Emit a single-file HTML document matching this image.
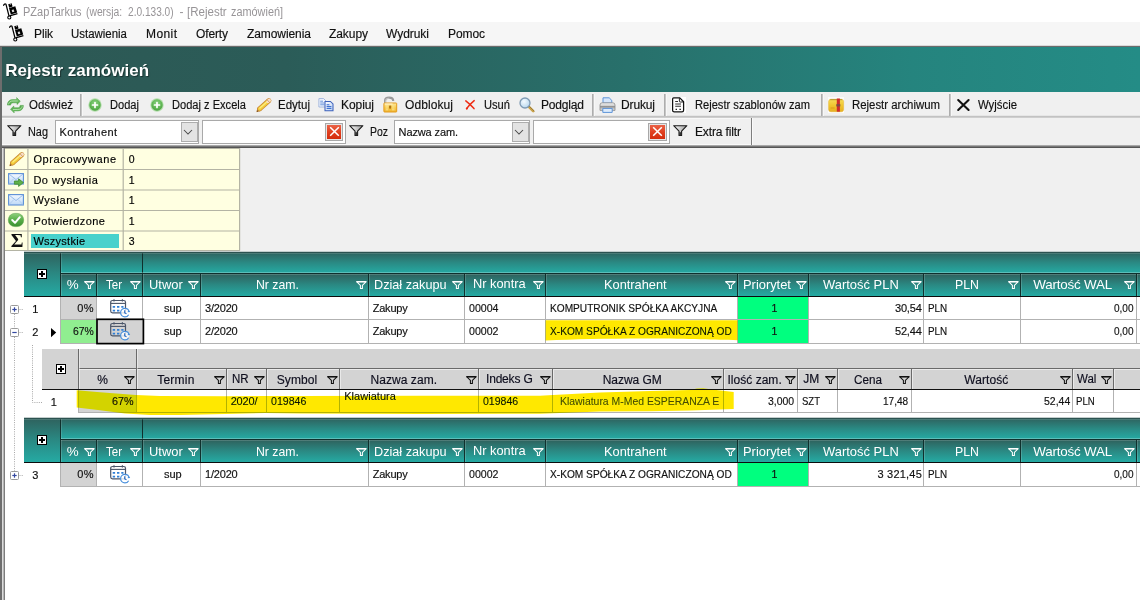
<!DOCTYPE html>
<html><head><meta charset="utf-8"><title>PZapTarkus</title>
<style>
html,body{margin:0;padding:0}
body{width:1140px;height:600px;overflow:hidden;background:#fff;position:relative;font-family:"Liberation Sans",sans-serif;font-size:12px}
body div{position:absolute;box-sizing:border-box}
body svg{position:absolute;overflow:visible}
</style></head><body>
<div style="left:0px;top:0px;width:1140px;height:22px;background:#fff"></div>
<div style="left:22.6px;top:1px;height:22px;line-height:22px;font-size:12px;color:#979497;-webkit-text-stroke:0.16px;transform:scaleX(0.9153);transform-origin:0 50%;white-space:nowrap;-webkit-text-stroke:0;">PZapTarkus</div>
<div style="left:86.3px;top:1px;height:22px;line-height:22px;font-size:12px;color:#979497;-webkit-text-stroke:0.16px;transform:scaleX(0.8595);transform-origin:0 50%;white-space:nowrap;-webkit-text-stroke:0;">(wersja:</div>
<div style="left:128.2px;top:1px;height:22px;line-height:22px;font-size:12px;color:#979497;-webkit-text-stroke:0.16px;transform:scaleX(0.8435);transform-origin:0 50%;white-space:nowrap;-webkit-text-stroke:0;">2.0.133.0)</div>
<div style="left:179.59px;top:1px;height:22px;line-height:22px;font-size:12px;color:#979497;-webkit-text-stroke:0.16px;white-space:nowrap;-webkit-text-stroke:0;">-</div>
<div style="left:186.5px;top:1px;height:22px;line-height:22px;font-size:12px;color:#979497;-webkit-text-stroke:0.16px;transform:scaleX(0.9603);transform-origin:0 50%;white-space:nowrap;-webkit-text-stroke:0;">[Rejestr</div>
<div style="left:230.6px;top:1px;height:22px;line-height:22px;font-size:12px;color:#979497;-webkit-text-stroke:0.16px;transform:scaleX(0.9066);transform-origin:0 50%;white-space:nowrap;-webkit-text-stroke:0;">zamówień]</div>
<div style="left:0px;top:22px;width:1140px;height:24px;background:#f6f6f6"></div>
<div style="left:0px;top:45px;width:1140px;height:1px;background:#dadada"></div>
<div style="left:34.0px;top:23px;height:22px;line-height:22px;font-size:12px;color:#111;-webkit-text-stroke:0.16px;letter-spacing:-0.127px;white-space:nowrap;">Plik</div>
<div style="left:71.0px;top:23px;height:22px;line-height:22px;font-size:12px;color:#111;-webkit-text-stroke:0.16px;transform:scaleX(0.9534);transform-origin:0 50%;white-space:nowrap;">Ustawienia</div>
<div style="left:146.0px;top:23px;height:22px;line-height:22px;font-size:12px;color:#111;-webkit-text-stroke:0.16px;letter-spacing:0.415px;white-space:nowrap;">Monit</div>
<div style="left:196.0px;top:23px;height:22px;line-height:22px;font-size:12px;color:#111;-webkit-text-stroke:0.16px;letter-spacing:-0.140px;white-space:nowrap;">Oferty</div>
<div style="left:247.0px;top:23px;height:22px;line-height:22px;font-size:12px;color:#111;-webkit-text-stroke:0.16px;letter-spacing:-0.082px;white-space:nowrap;">Zamowienia</div>
<div style="left:329.0px;top:23px;height:22px;line-height:22px;font-size:12px;color:#111;-webkit-text-stroke:0.16px;letter-spacing:-0.072px;white-space:nowrap;">Zakupy</div>
<div style="left:386.0px;top:23px;height:22px;line-height:22px;font-size:12px;color:#111;-webkit-text-stroke:0.16px;letter-spacing:-0.043px;white-space:nowrap;">Wydruki</div>
<div style="left:448.0px;top:23px;height:22px;line-height:22px;font-size:12px;color:#111;-webkit-text-stroke:0.16px;letter-spacing:-0.080px;white-space:nowrap;">Pomoc</div>
<div style="left:0px;top:46px;width:1140px;height:1px;background:#6b6b6b"></div>
<div style="left:0px;top:47px;width:1140px;height:45px;background:linear-gradient(90deg,#2d5854 0%,#2b5c58 25%,#28706b 55%,#25847e 80%,#248c86 100%)"></div>
<div style="left:5.3px;top:59.5px;height:22px;line-height:22px;font-size:17px;color:#fff;font-weight:bold;letter-spacing:0.009px;white-space:nowrap;text-shadow:1px 1px 1px rgba(0,0,0,.45);">Rejestr zamówień</div>
<div style="left:0px;top:92px;width:1140px;height:26px;background:#f0f0f0"></div>
<div style="left:0px;top:115px;width:1140px;height:1px;background:#e6e6e6"></div>
<div style="left:0px;top:116px;width:1140px;height:1px;background:#c2c2c2"></div>
<div style="left:0px;top:117px;width:1140px;height:1px;background:#cecece"></div>
<div style="left:29.0px;top:95px;height:21px;line-height:21px;font-size:12px;color:#111;-webkit-text-stroke:0.16px;transform:scaleX(0.9561);transform-origin:0 50%;white-space:nowrap;">Odśwież</div>
<div style="left:110.0px;top:95px;height:21px;line-height:21px;font-size:12px;color:#111;-webkit-text-stroke:0.16px;transform:scaleX(0.9242);transform-origin:0 50%;white-space:nowrap;">Dodaj</div>
<div style="left:172.0px;top:95px;height:21px;line-height:21px;font-size:12px;color:#111;-webkit-text-stroke:0.16px;transform:scaleX(0.9238);transform-origin:0 50%;white-space:nowrap;">Dodaj z Excela</div>
<div style="left:278.0px;top:95px;height:21px;line-height:21px;font-size:12px;color:#111;-webkit-text-stroke:0.16px;transform:scaleX(0.9592);transform-origin:0 50%;white-space:nowrap;">Edytuj</div>
<div style="left:341.0px;top:95px;height:21px;line-height:21px;font-size:12px;color:#111;-webkit-text-stroke:0.16px;letter-spacing:-0.072px;white-space:nowrap;">Kopiuj</div>
<div style="left:405.0px;top:95px;height:21px;line-height:21px;font-size:12px;color:#111;-webkit-text-stroke:0.16px;letter-spacing:0.094px;white-space:nowrap;">Odblokuj</div>
<div style="left:484.0px;top:95px;height:21px;line-height:21px;font-size:12px;color:#111;-webkit-text-stroke:0.16px;transform:scaleX(0.9279);transform-origin:0 50%;white-space:nowrap;">Usuń</div>
<div style="left:541.0px;top:95px;height:21px;line-height:21px;font-size:12px;color:#111;-webkit-text-stroke:0.16px;letter-spacing:-0.173px;white-space:nowrap;">Podgląd</div>
<div style="left:621.0px;top:95px;height:21px;line-height:21px;font-size:12px;color:#111;-webkit-text-stroke:0.16px;letter-spacing:-0.136px;white-space:nowrap;">Drukuj</div>
<div style="left:695.0px;top:95px;height:21px;line-height:21px;font-size:12px;color:#111;-webkit-text-stroke:0.16px;transform:scaleX(0.9268);transform-origin:0 50%;white-space:nowrap;">Rejestr szablonów zam</div>
<div style="left:852.0px;top:95px;height:21px;line-height:21px;font-size:12px;color:#111;-webkit-text-stroke:0.16px;transform:scaleX(0.9493);transform-origin:0 50%;white-space:nowrap;">Rejestr archiwum</div>
<div style="left:978.0px;top:95px;height:21px;line-height:21px;font-size:12px;color:#111;-webkit-text-stroke:0.16px;transform:scaleX(0.9461);transform-origin:0 50%;white-space:nowrap;">Wyjście</div>
<div style="left:80px;top:94px;width:1px;height:22px;background:#adadad"></div>
<div style="left:81px;top:94px;width:1px;height:22px;background:#c6c6c6"></div>
<div style="left:82px;top:94px;width:1px;height:22px;background:#f7f7f7"></div>
<div style="left:592px;top:94px;width:1px;height:22px;background:#adadad"></div>
<div style="left:593px;top:94px;width:1px;height:22px;background:#c6c6c6"></div>
<div style="left:594px;top:94px;width:1px;height:22px;background:#f7f7f7"></div>
<div style="left:664px;top:94px;width:1px;height:22px;background:#adadad"></div>
<div style="left:665px;top:94px;width:1px;height:22px;background:#c6c6c6"></div>
<div style="left:666px;top:94px;width:1px;height:22px;background:#f7f7f7"></div>
<div style="left:821px;top:94px;width:1px;height:22px;background:#adadad"></div>
<div style="left:822px;top:94px;width:1px;height:22px;background:#c6c6c6"></div>
<div style="left:823px;top:94px;width:1px;height:22px;background:#f7f7f7"></div>
<div style="left:949px;top:94px;width:1px;height:22px;background:#adadad"></div>
<div style="left:950px;top:94px;width:1px;height:22px;background:#c6c6c6"></div>
<div style="left:951px;top:94px;width:1px;height:22px;background:#f7f7f7"></div>
<div style="left:0px;top:118px;width:1140px;height:28px;background:#f0f0f0"></div>
<div style="left:0px;top:118px;width:751px;height:27px;background:#f0f0f0"></div>
<div style="left:751px;top:118px;width:1px;height:27px;background:#7e7e7e"></div>
<div style="left:752px;top:118px;width:1px;height:27px;background:#fafafa"></div>
<div style="left:0px;top:118px;width:750px;height:1px;background:#f8f8f8"></div>
<div style="left:28.0px;top:122px;height:21px;line-height:21px;font-size:12px;color:#111;-webkit-text-stroke:0.16px;transform:scaleX(0.9083);transform-origin:0 50%;white-space:nowrap;">Nag</div>
<div style="left:370.0px;top:122px;height:21px;line-height:21px;font-size:12px;color:#111;-webkit-text-stroke:0.16px;transform:scaleX(0.8696);transform-origin:0 50%;white-space:nowrap;">Poz</div>
<div style="left:695.0px;top:121.5px;height:21px;line-height:21px;font-size:12px;color:#111;-webkit-text-stroke:0.16px;letter-spacing:-0.134px;white-space:nowrap;">Extra filtr</div>
<div style="left:55px;top:120px;width:144px;height:24px;background:#fff;border:1px solid #a9a9a9"></div>
<div style="left:181px;top:122px;width:16.5px;height:19.5px;background:#e3e3e3;border:1px solid #adadad"></div>
<svg style="left:183px;top:129px" width="10" height="7" viewBox="0 0 10 7"><path d="M1 1 L5 5 L9 1" fill="none" stroke="#484848" stroke-width="1.05"/></svg>
<div style="left:59.6px;top:120.3px;height:24px;line-height:24px;font-size:11px;color:#111;-webkit-text-stroke:0.16px;letter-spacing:0.395px;white-space:nowrap;">Kontrahent</div>
<div style="left:202px;top:120px;width:144px;height:24px;background:#fff;border:1px solid #a9a9a9"></div>
<div style="left:324.5px;top:122.5px;width:18.5px;height:18px;background:#e6e6e6;border:1px solid #a8a8a8"></div>
<div style="left:326.5px;top:124.5px;width:14.5px;height:14px;background:linear-gradient(180deg,#ea6247 0%,#e0401f 50%,#d42c0c 100%)"></div>
<svg style="left:328.5px;top:126px" width="11" height="11" viewBox="0 0 11 11"><path d="M1.2 1.2 L9.8 9.8 M9.8 1.2 L1.2 9.8" fill="none" stroke="#fff" stroke-width="1.5"/></svg>
<div style="left:394px;top:120px;width:136px;height:24px;background:#fff;border:1px solid #a9a9a9"></div>
<div style="left:512px;top:122px;width:16.5px;height:19.5px;background:#e3e3e3;border:1px solid #adadad"></div>
<svg style="left:514px;top:129px" width="10" height="7" viewBox="0 0 10 7"><path d="M1 1 L5 5 L9 1" fill="none" stroke="#484848" stroke-width="1.05"/></svg>
<div style="left:398.6px;top:120.3px;height:24px;line-height:24px;font-size:11px;color:#111;-webkit-text-stroke:0.16px;letter-spacing:-0.122px;white-space:nowrap;">Nazwa zam.</div>
<div style="left:533px;top:120px;width:136.5px;height:24px;background:#fff;border:1px solid #a9a9a9"></div>
<div style="left:648.0px;top:122.5px;width:18.5px;height:18px;background:#e6e6e6;border:1px solid #a8a8a8"></div>
<div style="left:650.0px;top:124.5px;width:14.5px;height:14px;background:linear-gradient(180deg,#ea6247 0%,#e0401f 50%,#d42c0c 100%)"></div>
<svg style="left:652.0px;top:126px" width="11" height="11" viewBox="0 0 11 11"><path d="M1.2 1.2 L9.8 9.8 M9.8 1.2 L1.2 9.8" fill="none" stroke="#fff" stroke-width="1.5"/></svg>
<svg style="left:3px;top:3px" width="16" height="18" viewBox="0 0 16 18"><path d="M0.6 2.3 Q1.6 0.3 3 1.3 L6.1 13.4" fill="none" stroke="#000" stroke-width="1.25" stroke-linecap="round"/><path d="M5.2 1.3 L8.6 0.3 L9.6 3.6 L6.2 4.7 Z" fill="#000"/><path d="M6.7 0.7 L7.5 0.45 L7.8 1.5 L7.0 1.75 Z" fill="#fff"/><path d="M6.0 5.0 L12.3 3.2 L14.2 9.6 L7.8 11.5 Z" fill="#000"/><path d="M8.7 7.0 L10.7 6.4 L11.4 8.6 L9.4 9.2 Z" fill="#fff"/><path d="M9.7 7.6 L10.3 7.4 L10.5 8.1 L9.9 8.3 Z" fill="#000"/><path d="M6.6 12.9 L14.4 10.7" fill="none" stroke="#000" stroke-width="1.3"/><circle cx="6.3" cy="14.5" r="1.55" fill="#fff" stroke="#000" stroke-width="1.1"/></svg>
<svg style="left:9px;top:25px" width="16" height="18" viewBox="0 0 16 18"><path d="M0.6 2.3 Q1.6 0.3 3 1.3 L6.1 13.4" fill="none" stroke="#000" stroke-width="1.25" stroke-linecap="round"/><path d="M5.2 1.3 L8.6 0.3 L9.6 3.6 L6.2 4.7 Z" fill="#000"/><path d="M6.7 0.7 L7.5 0.45 L7.8 1.5 L7.0 1.75 Z" fill="#fff"/><path d="M6.0 5.0 L12.3 3.2 L14.2 9.6 L7.8 11.5 Z" fill="#000"/><path d="M8.7 7.0 L10.7 6.4 L11.4 8.6 L9.4 9.2 Z" fill="#fff"/><path d="M9.7 7.6 L10.3 7.4 L10.5 8.1 L9.9 8.3 Z" fill="#000"/><path d="M6.6 12.9 L14.4 10.7" fill="none" stroke="#000" stroke-width="1.3"/><circle cx="6.3" cy="14.5" r="1.55" fill="#fff" stroke="#000" stroke-width="1.1"/></svg>
<svg style="left:6.5px;top:96.5px" width="17" height="17" viewBox="0 0 17 17"><defs><linearGradient id="gr1" x1="0" y1="0" x2="0" y2="1"><stop offset="0" stop-color="#7cc873"/><stop offset="1" stop-color="#4fa547"/></linearGradient></defs><path d="M0.4 8.1 C0.4 4.6 2.6 2.6 6 2.6 L9.8 2.6 L9.6 0.6 L13.3 4.3 L10 7.5 L10 5.8 L6.5 5.8 C4.8 5.8 3.8 6.6 3.6 8.1 Z" fill="url(#gr1)" stroke="#4a9f44" stroke-width="0.5" stroke-linejoin="round"/><path d="M1.6 7 C2 5 3.6 4 6 4 L10.4 4" fill="none" stroke="#b4e2ae" stroke-width="0.9" stroke-linecap="round"/><g transform="rotate(180 8.4 8.25)"><path d="M0.4 8.1 C0.4 4.6 2.6 2.6 6 2.6 L9.8 2.6 L9.6 0.6 L13.3 4.3 L10 7.5 L10 5.8 L6.5 5.8 C4.8 5.8 3.8 6.6 3.6 8.1 Z" fill="url(#gr1)" stroke="#4a9f44" stroke-width="0.5" stroke-linejoin="round"/><path d="M1.6 7 C2 5 3.6 4 6 4 L10.4 4" fill="none" stroke="#b4e2ae" stroke-width="0.9" stroke-linecap="round"/></g></svg>
<svg style="left:88px;top:98px" width="14" height="14" viewBox="0 0 14 14"><defs><radialGradient id="ga" cx="0.5" cy="0.35" r="0.75"><stop offset="0" stop-color="#8fd486"/><stop offset="0.6" stop-color="#5cb350"/><stop offset="1" stop-color="#46993c"/></radialGradient></defs><circle cx="7" cy="7" r="6.7" fill="#b4deac"/><circle cx="7" cy="7" r="5.7" fill="url(#ga)"/><path d="M7 4.5 V9.5 M4.5 7 H9.5" stroke="#fff" stroke-width="1.7" stroke-linecap="round"/></svg>
<svg style="left:150px;top:98px" width="14" height="14" viewBox="0 0 14 14"><defs><radialGradient id="ga" cx="0.5" cy="0.35" r="0.75"><stop offset="0" stop-color="#8fd486"/><stop offset="0.6" stop-color="#5cb350"/><stop offset="1" stop-color="#46993c"/></radialGradient></defs><circle cx="7" cy="7" r="6.7" fill="#b4deac"/><circle cx="7" cy="7" r="5.7" fill="url(#ga)"/><path d="M7 4.5 V9.5 M4.5 7 H9.5" stroke="#fff" stroke-width="1.7" stroke-linecap="round"/></svg>
<svg style="left:256px;top:97.5px" width="16" height="15" viewBox="0 0 16 15"><path d="M0.8 13.7 L2.2 9.3 L5 12.4 Z" fill="#eccaa0" stroke="#b9772c" stroke-width="0.8" stroke-linejoin="round"/><path d="M0.8 13.7 L1.3 12.1 L2.3 13.2 Z" fill="#5a3a14"/><path d="M3.6 10.9 L12.9 2.7" stroke="#c78734" stroke-width="5" stroke-linecap="round"/><path d="M3.6 10.9 L12.9 2.7" stroke="#f3cb3c" stroke-width="3.5" stroke-linecap="round"/><path d="M3.9 10.1 L12.2 2.8" stroke="#fbec7e" stroke-width="1.3" stroke-linecap="round"/><path d="M12.2 3.3 L13.2 2.4" stroke="#f6dccb" stroke-width="3.4" stroke-linecap="round"/><path d="M10.9 1.6 L14.1 5" stroke="#c78734" stroke-width="0.7"/></svg>
<svg style="left:318px;top:98px" width="16" height="14" viewBox="0 0 16 14"><defs><linearGradient id="gcp" x1="0" y1="0" x2="1" y2="1"><stop offset="0" stop-color="#ffffff"/><stop offset="1" stop-color="#b9d0f4"/></linearGradient></defs><path d="M0.9 0.6 H5.6 L8 3 V9 H0.9 Z" fill="#f2f6fd" stroke="#9ab0da" stroke-width="0.9"/><path d="M2.2 3.2 H5 M2.2 5 H6.6 M2.2 6.8 H6.6" stroke="#5b8ad8" stroke-width="0.9"/><path d="M7 3.4 H12.4 L15 6 V12.8 H7 Z" fill="url(#gcp)" stroke="#3d62bc" stroke-width="1.05"/><path d="M8.6 6.8 H11.4 M8.6 8.6 H13.4 M8.6 10.4 H13.4" stroke="#2f66cc" stroke-width="1"/></svg>
<svg style="left:383px;top:96px" width="15" height="17" viewBox="0 0 15 17"><defs><linearGradient id="gl" x1="0" y1="0" x2="0" y2="1"><stop offset="0" stop-color="#fde9a0"/><stop offset="0.5" stop-color="#f8cd50"/><stop offset="1" stop-color="#f0b430"/></linearGradient></defs><path d="M2.1 7.4 V4.6 Q2.1 1.6 6.1 1.6 Q10.2 1.6 10.2 4.9" fill="none" stroke="#9a9a9a" stroke-width="2.2"/><path d="M2.4 7 V4.6 Q2.4 2.2 6.1 2.2" fill="none" stroke="#d8d8d8" stroke-width="0.7"/><rect x="0.9" y="7" width="12.8" height="9" rx="0.6" fill="url(#gl)" stroke="#e39a1c" stroke-width="1"/><path d="M1.9 8 H9.6" stroke="#fff8dc" stroke-width="0.9"/><path d="M2.8 10 H5.2 M2.8 12 H5.2 M2.8 13.8 H5.2 M9 10 H11.6 M9 12 H11.6 M9 13.8 H11.6" stroke="#fbe9a4" stroke-width="0.8"/><rect x="6.1" y="9.5" width="2" height="3.3" rx="0.8" fill="#b07414"/></svg>
<svg style="left:464.5px;top:100px" width="10" height="10" viewBox="0 0 10 10"><path d="M0.8 0.9 Q4.6 3.8 9 8.6" fill="none" stroke="#ee2c14" stroke-width="1.5" stroke-linecap="round"/><path d="M9.2 0.6 Q5 4 1.6 8.6" fill="none" stroke="#ee2c14" stroke-width="1.5" stroke-linecap="round"/><circle cx="1.9" cy="8.5" r="1.1" fill="#ee2c14"/></svg>
<svg style="left:519px;top:96.5px" width="16" height="16" viewBox="0 0 16 16"><defs><radialGradient id="gm" cx="0.4" cy="0.35" r="0.7"><stop offset="0" stop-color="#f4fbff"/><stop offset="1" stop-color="#b5d6ee"/></radialGradient></defs><path d="M9.4 9.4 L14.2 14.2" stroke="#c9a24a" stroke-width="2.6" stroke-linecap="round"/><path d="M9.4 9.4 L14.2 14.2" stroke="#8a6a2a" stroke-width="0.7" stroke-linecap="round" transform="translate(0.9,-0.2)"/><circle cx="6" cy="6" r="5" fill="url(#gm)" stroke="#7f9bb4" stroke-width="1.3"/></svg>
<svg style="left:598.5px;top:96.8px" width="17" height="16" viewBox="0 0 17 16"><defs><linearGradient id="gp" x1="0" y1="0" x2="0" y2="1"><stop offset="0" stop-color="#f2f2f2"/><stop offset="0.38" stop-color="#cfcfcf"/><stop offset="0.5" stop-color="#8c8c8c"/><stop offset="0.68" stop-color="#b8b8b8"/><stop offset="1" stop-color="#e2e2e2"/></linearGradient></defs><path d="M4 6 V0.8 H10.2 L12.8 3.4 V6 Z" fill="#d6e6fb" stroke="#5c93d8" stroke-width="1"/><path d="M1 13.4 V8 Q1 5.8 3.2 5.8 H13.8 Q16 5.8 16 8 V13.4 Z" fill="url(#gp)" stroke="#8a8a8a" stroke-width="0.8"/><path d="M3.8 11.4 H13.2 V15.4 H3.8 Z" fill="#dcebfc" stroke="#5c93d8" stroke-width="1"/></svg>
<div style="left:671.4px;top:96.7px;width:14.5px;height:16.3px;background:#fff"></div>
<svg style="left:672px;top:96.9px" width="13" height="16" viewBox="0 0 13 16"><path d="M1.6 0.9 H7.8 L11.6 4.7 V13.2 Q11.6 14.8 10 14.8 H2.2 Q0.6 14.8 0.6 13.2 V1.9 Q0.6 0.9 1.6 0.9 Z" fill="#fff" stroke="#111" stroke-width="1.25" stroke-linejoin="round"/><path d="M7.4 1.2 V4.2 Q7.4 5 8.2 5 H11.2" fill="none" stroke="#111" stroke-width="0.9"/><path d="M3.2 4.4 H6 M3.2 7 H9 M3.2 9.3 H9" stroke="#333" stroke-width="1.05"/><path d="M3.6 12.3 H5 M7.4 12.3 H8.9" stroke="#222" stroke-width="1.2"/></svg>
<div style="left:827.7px;top:96.8px;width:16.3px;height:16px;background:#fbfbfb"></div>
<svg style="left:828.2px;top:97.5px" width="16" height="15" viewBox="0 0 16 15"><defs><linearGradient id="gz" x1="0" y1="0" x2="0" y2="1"><stop offset="0" stop-color="#f6dc58"/><stop offset="0.5" stop-color="#f0c630"/><stop offset="1" stop-color="#e6ae22"/></linearGradient></defs><rect x="0.6" y="1.3" width="15" height="12.4" rx="2.2" fill="url(#gz)" stroke="#e3b02c" stroke-width="0.5"/><path d="M2.2 1.7 H14" stroke="#a5861c" stroke-width="0.8"/><rect x="8.8" y="0.5" width="3.1" height="13.2" fill="#cf2b2b"/><rect x="8.3" y="6.2" width="4" height="2.2" fill="#7b4a48"/><path d="M2.6 10 H6.6" stroke="#dc9c1c" stroke-width="1.1"/></svg>
<svg style="left:957.3px;top:99px" width="13" height="12" viewBox="0 0 13 12"><path d="M1.2 1 L11.6 11 M11.6 1 L1.2 11" stroke="#111" stroke-width="2.1" stroke-linecap="round"/></svg>
<svg style="left:7px;top:125px" width="15" height="11" viewBox="0 0 15 11"><defs><linearGradient id="gf" x1="0" y1="0" x2="1" y2="0"><stop offset="0" stop-color="#fff"/><stop offset="1" stop-color="#9a9a9a"/></linearGradient></defs><path d="M0.7 0.7 H13.9 L8.6 6.2 V10.4 H6 V6.2 Z" fill="url(#gf)" stroke="#1a1a1a" stroke-width="1.1" stroke-linejoin="round"/><path d="M6.2 7.2 H8.4 V10.2 H6.2 Z" fill="#333"/></svg>
<svg style="left:349px;top:125px" width="15" height="11" viewBox="0 0 15 11"><defs><linearGradient id="gf" x1="0" y1="0" x2="1" y2="0"><stop offset="0" stop-color="#fff"/><stop offset="1" stop-color="#9a9a9a"/></linearGradient></defs><path d="M0.7 0.7 H13.9 L8.6 6.2 V10.4 H6 V6.2 Z" fill="url(#gf)" stroke="#1a1a1a" stroke-width="1.1" stroke-linejoin="round"/><path d="M6.2 7.2 H8.4 V10.2 H6.2 Z" fill="#333"/></svg>
<svg style="left:673px;top:125px" width="15" height="11" viewBox="0 0 15 11"><defs><linearGradient id="gf" x1="0" y1="0" x2="1" y2="0"><stop offset="0" stop-color="#fff"/><stop offset="1" stop-color="#9a9a9a"/></linearGradient></defs><path d="M0.7 0.7 H13.9 L8.6 6.2 V10.4 H6 V6.2 Z" fill="url(#gf)" stroke="#1a1a1a" stroke-width="1.1" stroke-linejoin="round"/><path d="M6.2 7.2 H8.4 V10.2 H6.2 Z" fill="#333"/></svg>
<div style="left:2px;top:144px;width:749px;height:1px;background:#fafafa"></div>
<div style="left:0px;top:145px;width:1140px;height:1px;background:#a8a8a8"></div>
<div style="left:0px;top:146px;width:1140px;height:1px;background:#777"></div>
<div style="left:0px;top:147px;width:1140px;height:1px;background:#555"></div>
<div style="left:0px;top:148px;width:1140px;height:103px;background:#f0f0f0"></div>
<div style="left:0px;top:47px;width:2px;height:553px;background:#6d6d6d"></div>
<div style="left:2px;top:148px;width:1px;height:452px;background:#dcdcdc"></div>
<div style="left:3px;top:148px;width:1px;height:452px;background:#b4b4b4"></div>
<div style="left:4px;top:148px;width:1px;height:452px;background:#7c7c7c"></div>
<div style="left:5px;top:148px;width:235px;height:102.5px;background:#ffffe1"></div>
<div style="left:31.4px;top:234.2px;width:88px;height:13.5px;background:#48d1cc"></div>
<div style="left:33.4px;top:149.0px;height:20.5px;line-height:20.5px;font-size:11px;color:#000;-webkit-text-stroke:0.16px;letter-spacing:0.619px;white-space:nowrap;">Opracowywane</div>
<div style="left:128.7px;top:149.0px;height:20.5px;line-height:20.5px;font-size:10.5px;color:#000;-webkit-text-stroke:0.16px;white-space:nowrap;">0</div>
<div style="left:33.4px;top:169.5px;height:20.5px;line-height:20.5px;font-size:11px;color:#000;-webkit-text-stroke:0.16px;letter-spacing:0.525px;white-space:nowrap;">Do wysłania</div>
<div style="left:128.7px;top:169.5px;height:20.5px;line-height:20.5px;font-size:10.5px;color:#000;-webkit-text-stroke:0.16px;white-space:nowrap;">1</div>
<div style="left:33.4px;top:190.0px;height:20.5px;line-height:20.5px;font-size:11px;color:#000;-webkit-text-stroke:0.16px;letter-spacing:0.587px;white-space:nowrap;">Wysłane</div>
<div style="left:128.7px;top:190.0px;height:20.5px;line-height:20.5px;font-size:10.5px;color:#000;-webkit-text-stroke:0.16px;white-space:nowrap;">1</div>
<div style="left:33.4px;top:210.5px;height:20.5px;line-height:20.5px;font-size:11px;color:#000;-webkit-text-stroke:0.16px;letter-spacing:0.449px;white-space:nowrap;">Potwierdzone</div>
<div style="left:128.7px;top:210.5px;height:20.5px;line-height:20.5px;font-size:10.5px;color:#000;-webkit-text-stroke:0.16px;white-space:nowrap;">1</div>
<div style="left:33.4px;top:231.0px;height:20.5px;line-height:20.5px;font-size:11px;color:#000;-webkit-text-stroke:0.16px;letter-spacing:0.263px;white-space:nowrap;">Wszystkie</div>
<div style="left:128.7px;top:231.0px;height:20.5px;line-height:20.5px;font-size:10.5px;color:#000;-webkit-text-stroke:0.16px;white-space:nowrap;">3</div>
<svg style="left:0;top:0" width="260" height="260" viewBox="0 0 260 260"><rect x="5" y="148" width="235" height="1" fill="#b4b4a4"/><rect x="5" y="169" width="235" height="1" fill="#b4b4a4"/><rect x="5" y="189.5" width="235" height="1" fill="#b4b4a4"/><rect x="5" y="210" width="235" height="1" fill="#b4b4a4"/><rect x="5" y="230.5" width="235" height="1" fill="#b4b4a4"/><rect x="5" y="250" width="235" height="1" fill="#b4b4a4"/><rect x="27.3" y="148" width="1.2" height="102.5" fill="#b4b4a4"/><rect x="122.6" y="148" width="1.2" height="102.5" fill="#b4b4a4"/><rect x="239" y="148" width="1.2" height="102.5" fill="#b4b4a4"/></svg>
<svg style="left:8.5px;top:151.5px" width="16" height="15" viewBox="0 0 16 15"><path d="M0.8 13.7 L2.2 9.3 L5 12.4 Z" fill="#eccaa0" stroke="#b9772c" stroke-width="0.8" stroke-linejoin="round"/><path d="M0.8 13.7 L1.3 12.1 L2.3 13.2 Z" fill="#5a3a14"/><path d="M3.6 10.9 L12.9 2.7" stroke="#c78734" stroke-width="5" stroke-linecap="round"/><path d="M3.6 10.9 L12.9 2.7" stroke="#f3cb3c" stroke-width="3.5" stroke-linecap="round"/><path d="M3.9 10.1 L12.2 2.8" stroke="#fbec7e" stroke-width="1.3" stroke-linecap="round"/><path d="M12.2 3.3 L13.2 2.4" stroke="#f6dccb" stroke-width="3.4" stroke-linecap="round"/><path d="M10.9 1.6 L14.1 5" stroke="#c78734" stroke-width="0.7"/></svg>
<svg style="left:7.8px;top:173px" width="16" height="14" viewBox="0 0 16 14"><defs><linearGradient id="ge" x1="0" y1="0" x2="0" y2="1"><stop offset="0" stop-color="#f4f9ff"/><stop offset="1" stop-color="#bcd8f6"/></linearGradient></defs><rect x="0.6" y="0.6" width="14.8" height="10.4" fill="url(#ge)" stroke="#5b8fd6" stroke-width="1.1"/><path d="M1 1 L8 6.6 L15 1" fill="none" stroke="#8fb6e8" stroke-width="0.9"/><path d="M1 10.6 L5.8 5.6 M15 10.6 L10.2 5.6" fill="none" stroke="#a9c8ee" stroke-width="0.8"/><path d="M6.4 8 H10.6 V5.8 L15.4 9.6 L10.6 13.4 V11.2 H6.4 Z" fill="#5fb04a" stroke="#3d8a30" stroke-width="0.8" stroke-linejoin="round"/></svg>
<svg style="left:7.8px;top:193.6px" width="16" height="14" viewBox="0 0 16 14"><defs><linearGradient id="ge" x1="0" y1="0" x2="0" y2="1"><stop offset="0" stop-color="#f4f9ff"/><stop offset="1" stop-color="#bcd8f6"/></linearGradient></defs><rect x="0.6" y="0.6" width="14.8" height="10.4" fill="url(#ge)" stroke="#5b8fd6" stroke-width="1.1"/><path d="M1 1 L8 6.6 L15 1" fill="none" stroke="#8fb6e8" stroke-width="0.9"/><path d="M1 10.6 L5.8 5.6 M15 10.6 L10.2 5.6" fill="none" stroke="#a9c8ee" stroke-width="0.8"/></svg>
<svg style="left:7.8px;top:213.2px" width="16" height="14" viewBox="0 0 16 14"><defs><linearGradient id="gc" x1="0" y1="0" x2="0" y2="1"><stop offset="0" stop-color="#8fd07c"/><stop offset="0.5" stop-color="#58ae48"/><stop offset="1" stop-color="#3b8f30"/></linearGradient></defs><rect x="0.4" y="0.4" width="15.2" height="13.2" rx="6.4" ry="6.2" fill="url(#gc)" stroke="#5aa24e" stroke-width="0.6"/><path d="M4.2 7 L7 9.8 L11.8 4.2" fill="none" stroke="#fff" stroke-width="2" stroke-linecap="round" stroke-linejoin="round"/></svg>
<div style="left:10.8px;top:231px;height:19px;line-height:19px;font-size:19.5px;color:#111;font-weight:bold;white-space:nowrap;font-family:'Liberation Serif',serif;">Σ</div>
<div style="left:5px;top:251px;width:1135px;height:349px;background:#fff"></div>
<div style="left:24px;top:252px;width:36px;height:44px;background:linear-gradient(180deg,#2f615d 0%,#2a8983 50%,#25aaa3 100%)"></div>
<div style="left:60px;top:252px;width:1px;height:45px;background:#10302d"></div>
<div style="left:37px;top:269px;width:10px;height:10px;background:#fff;border:1px solid #000"></div>
<div style="left:39px;top:273px;width:6px;height:2px;background:#000"></div>
<div style="left:41px;top:271px;width:2px;height:6px;background:#000"></div>
<div style="left:61px;top:252px;width:82px;height:21px;background:linear-gradient(180deg,#2f615d 0%,#2a8983 50%,#25aaa3 100%)"></div>
<div style="left:142px;top:252px;width:1px;height:22px;background:#10302d"></div>
<div style="left:143px;top:252px;width:1px;height:21px;background:rgba(255,255,255,.13)"></div>
<div style="left:61px;top:252px;width:1px;height:21px;background:rgba(255,255,255,.13)"></div>
<div style="left:143px;top:252px;width:997px;height:21px;background:linear-gradient(180deg,#2f615d 0%,#2a8983 50%,#25aaa3 100%)"></div>
<div style="left:24px;top:251px;width:1116px;height:1px;background:#c2cdcc"></div>
<div style="left:24px;top:252px;width:1116px;height:1px;background:#2c5250"></div>
<div style="left:24px;top:253px;width:1116px;height:1px;background:rgba(255,255,255,.14)"></div>
<div style="left:61px;top:272px;width:1079px;height:1px;background:rgba(255,255,255,.25)"></div>
<div style="left:61px;top:273px;width:1079px;height:1px;background:#10302d"></div>
<div style="left:61px;top:274px;width:35px;height:22px;background:linear-gradient(180deg,#2f615d 0%,#2a8983 50%,#25aaa3 100%)"></div>
<div style="left:61px;top:274px;width:1px;height:22px;background:rgba(255,255,255,.16)"></div>
<div style="left:61px;top:274px;width:35px;height:1px;background:rgba(255,255,255,.16)"></div>
<div style="left:96px;top:274px;width:1px;height:22px;background:#10302d"></div>
<svg style="left:84px;top:280.7px" width="11" height="9" viewBox="0 0 11 9"><path d="M0.6 0.7 H10.2 L6.4 4.3 V7.4 H4.4 V4.3 Z" fill="none" stroke="#fff" stroke-width="1.05" stroke-linejoin="round"/><path d="M0.6 0.7 H10.2" stroke="#fff" stroke-width="1.4"/></svg>
<div style="left:66.64px;top:273.6px;height:22px;line-height:22px;font-size:13.4px;color:#fff;white-space:nowrap;">%</div>
<div style="left:97px;top:274px;width:45px;height:22px;background:linear-gradient(180deg,#2f615d 0%,#2a8983 50%,#25aaa3 100%)"></div>
<div style="left:97px;top:274px;width:1px;height:22px;background:rgba(255,255,255,.16)"></div>
<div style="left:97px;top:274px;width:45px;height:1px;background:rgba(255,255,255,.16)"></div>
<div style="left:142px;top:274px;width:1px;height:22px;background:#10302d"></div>
<svg style="left:130px;top:280.7px" width="11" height="9" viewBox="0 0 11 9"><path d="M0.6 0.7 H10.2 L6.4 4.3 V7.4 H4.4 V4.3 Z" fill="none" stroke="#fff" stroke-width="1.05" stroke-linejoin="round"/><path d="M0.6 0.7 H10.2" stroke="#fff" stroke-width="1.4"/></svg>
<div style="left:105.7px;top:273.6px;height:22px;line-height:22px;font-size:13.4px;color:#fff;transform:scaleX(0.8590);transform-origin:0 50%;white-space:nowrap;">Ter</div>
<div style="left:143px;top:274px;width:57px;height:22px;background:linear-gradient(180deg,#2f615d 0%,#2a8983 50%,#25aaa3 100%)"></div>
<div style="left:143px;top:274px;width:1px;height:22px;background:rgba(255,255,255,.16)"></div>
<div style="left:143px;top:274px;width:57px;height:1px;background:rgba(255,255,255,.16)"></div>
<div style="left:200px;top:274px;width:1px;height:22px;background:#10302d"></div>
<svg style="left:188px;top:280.7px" width="11" height="9" viewBox="0 0 11 9"><path d="M0.6 0.7 H10.2 L6.4 4.3 V7.4 H4.4 V4.3 Z" fill="none" stroke="#fff" stroke-width="1.05" stroke-linejoin="round"/><path d="M0.6 0.7 H10.2" stroke="#fff" stroke-width="1.4"/></svg>
<div style="left:149.0px;top:273.6px;height:22px;line-height:22px;font-size:13.4px;color:#fff;transform:scaleX(0.9636);transform-origin:0 50%;white-space:nowrap;">Utwor</div>
<div style="left:201px;top:274px;width:167px;height:22px;background:linear-gradient(180deg,#2f615d 0%,#2a8983 50%,#25aaa3 100%)"></div>
<div style="left:201px;top:274px;width:1px;height:22px;background:rgba(255,255,255,.16)"></div>
<div style="left:201px;top:274px;width:167px;height:1px;background:rgba(255,255,255,.16)"></div>
<div style="left:368px;top:274px;width:1px;height:22px;background:#10302d"></div>
<svg style="left:356px;top:280.7px" width="11" height="9" viewBox="0 0 11 9"><path d="M0.6 0.7 H10.2 L6.4 4.3 V7.4 H4.4 V4.3 Z" fill="none" stroke="#fff" stroke-width="1.05" stroke-linejoin="round"/><path d="M0.6 0.7 H10.2" stroke="#fff" stroke-width="1.4"/></svg>
<div style="left:256.0px;top:273.6px;height:22px;line-height:22px;font-size:13.4px;color:#fff;transform:scaleX(0.9168);transform-origin:0 50%;white-space:nowrap;">Nr zam.</div>
<div style="left:369px;top:274px;width:95px;height:22px;background:linear-gradient(180deg,#2f615d 0%,#2a8983 50%,#25aaa3 100%)"></div>
<div style="left:369px;top:274px;width:1px;height:22px;background:rgba(255,255,255,.16)"></div>
<div style="left:369px;top:274px;width:95px;height:1px;background:rgba(255,255,255,.16)"></div>
<div style="left:464px;top:274px;width:1px;height:22px;background:#10302d"></div>
<svg style="left:452px;top:280.7px" width="11" height="9" viewBox="0 0 11 9"><path d="M0.6 0.7 H10.2 L6.4 4.3 V7.4 H4.4 V4.3 Z" fill="none" stroke="#fff" stroke-width="1.05" stroke-linejoin="round"/><path d="M0.6 0.7 H10.2" stroke="#fff" stroke-width="1.4"/></svg>
<div style="left:373.7px;top:273.6px;height:22px;line-height:22px;font-size:13.4px;color:#fff;transform:scaleX(0.9464);transform-origin:0 50%;white-space:nowrap;">Dział zakupu</div>
<div style="left:465px;top:274px;width:80px;height:22px;background:linear-gradient(180deg,#2f615d 0%,#2a8983 50%,#25aaa3 100%)"></div>
<div style="left:465px;top:274px;width:1px;height:22px;background:rgba(255,255,255,.16)"></div>
<div style="left:465px;top:274px;width:80px;height:1px;background:rgba(255,255,255,.16)"></div>
<div style="left:545px;top:274px;width:1px;height:22px;background:#10302d"></div>
<svg style="left:533px;top:280.7px" width="11" height="9" viewBox="0 0 11 9"><path d="M0.6 0.7 H10.2 L6.4 4.3 V7.4 H4.4 V4.3 Z" fill="none" stroke="#fff" stroke-width="1.05" stroke-linejoin="round"/><path d="M0.6 0.7 H10.2" stroke="#fff" stroke-width="1.4"/></svg>
<div style="left:472.6px;top:272.6px;height:22px;line-height:22px;font-size:13.4px;color:#fff;transform:scaleX(0.9557);transform-origin:0 50%;white-space:nowrap;">Nr kontra</div>
<div style="left:546px;top:274px;width:191px;height:22px;background:linear-gradient(180deg,#2f615d 0%,#2a8983 50%,#25aaa3 100%)"></div>
<div style="left:546px;top:274px;width:1px;height:22px;background:rgba(255,255,255,.16)"></div>
<div style="left:546px;top:274px;width:191px;height:1px;background:rgba(255,255,255,.16)"></div>
<div style="left:737px;top:274px;width:1px;height:22px;background:#10302d"></div>
<svg style="left:725px;top:280.7px" width="11" height="9" viewBox="0 0 11 9"><path d="M0.6 0.7 H10.2 L6.4 4.3 V7.4 H4.4 V4.3 Z" fill="none" stroke="#fff" stroke-width="1.05" stroke-linejoin="round"/><path d="M0.6 0.7 H10.2" stroke="#fff" stroke-width="1.4"/></svg>
<div style="left:604.0px;top:273.6px;height:22px;line-height:22px;font-size:13.4px;color:#fff;transform:scaleX(0.9559);transform-origin:0 50%;white-space:nowrap;">Kontrahent</div>
<div style="left:738px;top:274px;width:70px;height:22px;background:linear-gradient(180deg,#2f615d 0%,#2a8983 50%,#25aaa3 100%)"></div>
<div style="left:738px;top:274px;width:1px;height:22px;background:rgba(255,255,255,.16)"></div>
<div style="left:738px;top:274px;width:70px;height:1px;background:rgba(255,255,255,.16)"></div>
<div style="left:808px;top:274px;width:1px;height:22px;background:#10302d"></div>
<svg style="left:796px;top:280.7px" width="11" height="9" viewBox="0 0 11 9"><path d="M0.6 0.7 H10.2 L6.4 4.3 V7.4 H4.4 V4.3 Z" fill="none" stroke="#fff" stroke-width="1.05" stroke-linejoin="round"/><path d="M0.6 0.7 H10.2" stroke="#fff" stroke-width="1.4"/></svg>
<div style="left:742.6px;top:273.6px;height:22px;line-height:22px;font-size:13.4px;color:#fff;transform:scaleX(0.9616);transform-origin:0 50%;white-space:nowrap;">Priorytet</div>
<div style="left:809px;top:274px;width:114px;height:22px;background:linear-gradient(180deg,#2f615d 0%,#2a8983 50%,#25aaa3 100%)"></div>
<div style="left:809px;top:274px;width:1px;height:22px;background:rgba(255,255,255,.16)"></div>
<div style="left:809px;top:274px;width:114px;height:1px;background:rgba(255,255,255,.16)"></div>
<div style="left:923px;top:274px;width:1px;height:22px;background:#10302d"></div>
<svg style="left:911px;top:280.7px" width="11" height="9" viewBox="0 0 11 9"><path d="M0.6 0.7 H10.2 L6.4 4.3 V7.4 H4.4 V4.3 Z" fill="none" stroke="#fff" stroke-width="1.05" stroke-linejoin="round"/><path d="M0.6 0.7 H10.2" stroke="#fff" stroke-width="1.4"/></svg>
<div style="left:822.6px;top:273.6px;height:22px;line-height:22px;font-size:13.4px;color:#fff;transform:scaleX(0.9661);transform-origin:0 50%;white-space:nowrap;">Wartość PLN</div>
<div style="left:924px;top:274px;width:96px;height:22px;background:linear-gradient(180deg,#2f615d 0%,#2a8983 50%,#25aaa3 100%)"></div>
<div style="left:924px;top:274px;width:1px;height:22px;background:rgba(255,255,255,.16)"></div>
<div style="left:924px;top:274px;width:96px;height:1px;background:rgba(255,255,255,.16)"></div>
<div style="left:1020px;top:274px;width:1px;height:22px;background:#10302d"></div>
<svg style="left:1008px;top:280.7px" width="11" height="9" viewBox="0 0 11 9"><path d="M0.6 0.7 H10.2 L6.4 4.3 V7.4 H4.4 V4.3 Z" fill="none" stroke="#fff" stroke-width="1.05" stroke-linejoin="round"/><path d="M0.6 0.7 H10.2" stroke="#fff" stroke-width="1.4"/></svg>
<div style="left:955.0px;top:273.6px;height:22px;line-height:22px;font-size:13.4px;color:#fff;transform:scaleX(0.9208);transform-origin:0 50%;white-space:nowrap;">PLN</div>
<div style="left:1021px;top:274px;width:115px;height:22px;background:linear-gradient(180deg,#2f615d 0%,#2a8983 50%,#25aaa3 100%)"></div>
<div style="left:1021px;top:274px;width:1px;height:22px;background:rgba(255,255,255,.16)"></div>
<div style="left:1021px;top:274px;width:115px;height:1px;background:rgba(255,255,255,.16)"></div>
<div style="left:1136px;top:274px;width:1px;height:22px;background:#10302d"></div>
<svg style="left:1124px;top:280.7px" width="11" height="9" viewBox="0 0 11 9"><path d="M0.6 0.7 H10.2 L6.4 4.3 V7.4 H4.4 V4.3 Z" fill="none" stroke="#fff" stroke-width="1.05" stroke-linejoin="round"/><path d="M0.6 0.7 H10.2" stroke="#fff" stroke-width="1.4"/></svg>
<div style="left:1033.3px;top:273.6px;height:22px;line-height:22px;font-size:13.4px;color:#fff;letter-spacing:-0.194px;white-space:nowrap;">Wartość WAL</div>
<div style="left:1137px;top:274px;width:4px;height:22px;background:linear-gradient(180deg,#2f615d 0%,#2a8983 50%,#25aaa3 100%)"></div>
<div style="left:1137px;top:274px;width:1px;height:22px;background:rgba(255,255,255,.16)"></div>
<div style="left:1137px;top:274px;width:4px;height:1px;background:rgba(255,255,255,.16)"></div>
<div style="left:1141px;top:274px;width:1px;height:22px;background:#10302d"></div>
<div style="left:24px;top:296px;width:1116px;height:1px;background:#0c0c0c"></div>
<div style="left:32.35px;top:297.5px;height:22px;line-height:22px;font-size:11px;color:#111;-webkit-text-stroke:0.16px;white-space:nowrap;">1</div>
<div style="left:61px;top:297px;width:35px;height:22px;background:#d3d3d3"></div>
<div style="left:77.3px;top:296.5px;height:22px;line-height:22px;font-size:11px;color:#111;-webkit-text-stroke:0.16px;letter-spacing:0.305px;white-space:nowrap;">0%</div>
<div style="left:164.0px;top:296.5px;height:22px;line-height:22px;font-size:11px;color:#111;-webkit-text-stroke:0.16px;letter-spacing:-0.005px;white-space:nowrap;">sup</div>
<div style="left:205.0px;top:296.5px;height:22px;line-height:22px;font-size:11px;color:#111;-webkit-text-stroke:0.16px;letter-spacing:-0.192px;white-space:nowrap;">3/2020</div>
<div style="left:372.7px;top:296.5px;height:22px;line-height:22px;font-size:11px;color:#111;-webkit-text-stroke:0.16px;letter-spacing:-0.216px;white-space:nowrap;">Zakupy</div>
<div style="left:469.0px;top:296.5px;height:22px;line-height:22px;font-size:11px;color:#111;-webkit-text-stroke:0.16px;transform:scaleX(0.9647);transform-origin:0 50%;white-space:nowrap;">00004</div>
<div style="left:550.0px;top:296.5px;height:22px;line-height:22px;font-size:11px;color:#111;-webkit-text-stroke:0.16px;transform:scaleX(0.9212);transform-origin:0 50%;white-space:nowrap;">KOMPUTRONIK SPÓŁKA AKCYJNA</div>
<div style="left:738px;top:297px;width:70px;height:22px;background:#00ff7f"></div>
<div style="left:771.5px;top:297px;height:22px;line-height:22px;font-size:10.5px;color:#111;-webkit-text-stroke:0.16px;white-space:nowrap;">1</div>
<div style="left:895.0px;top:296.5px;height:22px;line-height:22px;font-size:11px;color:#111;-webkit-text-stroke:0.16px;letter-spacing:-0.189px;white-space:nowrap;">30,54</div>
<div style="left:928.3px;top:296.5px;height:22px;line-height:22px;font-size:11px;color:#111;-webkit-text-stroke:0.16px;transform:scaleX(0.8974);transform-origin:0 50%;white-space:nowrap;">PLN</div>
<div style="left:1114.0px;top:296.5px;height:22px;line-height:22px;font-size:11px;color:#111;-webkit-text-stroke:0.16px;transform:scaleX(0.9114);transform-origin:0 50%;white-space:nowrap;">0,00</div>
<div style="left:96px;top:297px;width:1px;height:22px;background:#b2b2b2"></div>
<div style="left:142px;top:297px;width:1px;height:22px;background:#b2b2b2"></div>
<div style="left:200px;top:297px;width:1px;height:22px;background:#b2b2b2"></div>
<div style="left:368px;top:297px;width:1px;height:22px;background:#b2b2b2"></div>
<div style="left:464px;top:297px;width:1px;height:22px;background:#b2b2b2"></div>
<div style="left:545px;top:297px;width:1px;height:22px;background:#b2b2b2"></div>
<div style="left:737px;top:297px;width:1px;height:22px;background:#b2b2b2"></div>
<div style="left:808px;top:297px;width:1px;height:22px;background:#b2b2b2"></div>
<div style="left:923px;top:297px;width:1px;height:22px;background:#b2b2b2"></div>
<div style="left:1020px;top:297px;width:1px;height:22px;background:#b2b2b2"></div>
<div style="left:1136px;top:297px;width:1px;height:22px;background:#b2b2b2"></div>
<div style="left:1141px;top:297px;width:1px;height:22px;background:#b2b2b2"></div>
<div style="left:60px;top:297px;width:1px;height:23px;background:#b2b2b2"></div>
<div style="left:60px;top:319px;width:1080px;height:1px;background:#b2b2b2"></div>
<div style="left:32.35px;top:320.5px;height:23px;line-height:23px;font-size:11px;color:#111;-webkit-text-stroke:0.16px;white-space:nowrap;">2</div>
<div style="left:61px;top:320px;width:35px;height:23px;background:#90ee90"></div>
<div style="left:72.7px;top:319.5px;height:23px;line-height:23px;font-size:11px;color:#111;-webkit-text-stroke:0.16px;transform:scaleX(0.9455);transform-origin:0 50%;white-space:nowrap;">67%</div>
<div style="left:164.0px;top:319.5px;height:23px;line-height:23px;font-size:11px;color:#111;-webkit-text-stroke:0.16px;letter-spacing:-0.005px;white-space:nowrap;">sup</div>
<div style="left:205.0px;top:319.5px;height:23px;line-height:23px;font-size:11px;color:#111;-webkit-text-stroke:0.16px;letter-spacing:-0.192px;white-space:nowrap;">2/2020</div>
<div style="left:372.7px;top:319.5px;height:23px;line-height:23px;font-size:11px;color:#111;-webkit-text-stroke:0.16px;letter-spacing:-0.216px;white-space:nowrap;">Zakupy</div>
<div style="left:469.0px;top:319.5px;height:23px;line-height:23px;font-size:11px;color:#111;-webkit-text-stroke:0.16px;transform:scaleX(0.9647);transform-origin:0 50%;white-space:nowrap;">00002</div>
<div style="left:550.0px;top:319.5px;height:23px;line-height:23px;font-size:11px;color:#111;-webkit-text-stroke:0.16px;transform:scaleX(0.9233);transform-origin:0 50%;white-space:nowrap;">X-KOM SPÓŁKA Z OGRANICZONĄ OD</div>
<div style="left:738px;top:320px;width:70px;height:23px;background:#00ff7f"></div>
<div style="left:771.5px;top:320px;height:23px;line-height:23px;font-size:10.5px;color:#111;-webkit-text-stroke:0.16px;white-space:nowrap;">1</div>
<div style="left:895.0px;top:319.5px;height:23px;line-height:23px;font-size:11px;color:#111;-webkit-text-stroke:0.16px;letter-spacing:-0.189px;white-space:nowrap;">52,44</div>
<div style="left:928.3px;top:319.5px;height:23px;line-height:23px;font-size:11px;color:#111;-webkit-text-stroke:0.16px;transform:scaleX(0.8974);transform-origin:0 50%;white-space:nowrap;">PLN</div>
<div style="left:1114.0px;top:319.5px;height:23px;line-height:23px;font-size:11px;color:#111;-webkit-text-stroke:0.16px;transform:scaleX(0.9114);transform-origin:0 50%;white-space:nowrap;">0,00</div>
<div style="left:96px;top:320px;width:1px;height:23px;background:#b2b2b2"></div>
<div style="left:142px;top:320px;width:1px;height:23px;background:#b2b2b2"></div>
<div style="left:200px;top:320px;width:1px;height:23px;background:#b2b2b2"></div>
<div style="left:368px;top:320px;width:1px;height:23px;background:#b2b2b2"></div>
<div style="left:464px;top:320px;width:1px;height:23px;background:#b2b2b2"></div>
<div style="left:545px;top:320px;width:1px;height:23px;background:#b2b2b2"></div>
<div style="left:737px;top:320px;width:1px;height:23px;background:#b2b2b2"></div>
<div style="left:808px;top:320px;width:1px;height:23px;background:#b2b2b2"></div>
<div style="left:923px;top:320px;width:1px;height:23px;background:#b2b2b2"></div>
<div style="left:1020px;top:320px;width:1px;height:23px;background:#b2b2b2"></div>
<div style="left:1136px;top:320px;width:1px;height:23px;background:#b2b2b2"></div>
<div style="left:1141px;top:320px;width:1px;height:23px;background:#b2b2b2"></div>
<div style="left:60px;top:320px;width:1px;height:24px;background:#b2b2b2"></div>
<div style="left:60px;top:343px;width:1080px;height:1px;background:#b2b2b2"></div>
<div style="left:24px;top:418px;width:36px;height:44px;background:linear-gradient(180deg,#2f615d 0%,#2a8983 50%,#25aaa3 100%)"></div>
<div style="left:60px;top:418px;width:1px;height:45px;background:#10302d"></div>
<div style="left:37px;top:435px;width:10px;height:10px;background:#fff;border:1px solid #000"></div>
<div style="left:39px;top:439px;width:6px;height:2px;background:#000"></div>
<div style="left:41px;top:437px;width:2px;height:6px;background:#000"></div>
<div style="left:61px;top:418px;width:82px;height:21px;background:linear-gradient(180deg,#2f615d 0%,#2a8983 50%,#25aaa3 100%)"></div>
<div style="left:142px;top:418px;width:1px;height:22px;background:#10302d"></div>
<div style="left:143px;top:418px;width:1px;height:21px;background:rgba(255,255,255,.13)"></div>
<div style="left:61px;top:418px;width:1px;height:21px;background:rgba(255,255,255,.13)"></div>
<div style="left:143px;top:418px;width:997px;height:21px;background:linear-gradient(180deg,#2f615d 0%,#2a8983 50%,#25aaa3 100%)"></div>
<div style="left:24px;top:417px;width:1116px;height:1px;background:#c2cdcc"></div>
<div style="left:24px;top:418px;width:1116px;height:1px;background:#2c5250"></div>
<div style="left:24px;top:419px;width:1116px;height:1px;background:rgba(255,255,255,.14)"></div>
<div style="left:61px;top:438px;width:1079px;height:1px;background:rgba(255,255,255,.25)"></div>
<div style="left:61px;top:439px;width:1079px;height:1px;background:#10302d"></div>
<div style="left:61px;top:440px;width:35px;height:22px;background:linear-gradient(180deg,#2f615d 0%,#2a8983 50%,#25aaa3 100%)"></div>
<div style="left:61px;top:440px;width:1px;height:22px;background:rgba(255,255,255,.16)"></div>
<div style="left:61px;top:440px;width:35px;height:1px;background:rgba(255,255,255,.16)"></div>
<div style="left:96px;top:440px;width:1px;height:22px;background:#10302d"></div>
<svg style="left:84px;top:447.7px" width="11" height="9" viewBox="0 0 11 9"><path d="M0.6 0.7 H10.2 L6.4 4.3 V7.4 H4.4 V4.3 Z" fill="none" stroke="#fff" stroke-width="1.05" stroke-linejoin="round"/><path d="M0.6 0.7 H10.2" stroke="#fff" stroke-width="1.4"/></svg>
<div style="left:66.64px;top:440.6px;height:22px;line-height:22px;font-size:13.4px;color:#fff;white-space:nowrap;">%</div>
<div style="left:97px;top:440px;width:45px;height:22px;background:linear-gradient(180deg,#2f615d 0%,#2a8983 50%,#25aaa3 100%)"></div>
<div style="left:97px;top:440px;width:1px;height:22px;background:rgba(255,255,255,.16)"></div>
<div style="left:97px;top:440px;width:45px;height:1px;background:rgba(255,255,255,.16)"></div>
<div style="left:142px;top:440px;width:1px;height:22px;background:#10302d"></div>
<svg style="left:130px;top:447.7px" width="11" height="9" viewBox="0 0 11 9"><path d="M0.6 0.7 H10.2 L6.4 4.3 V7.4 H4.4 V4.3 Z" fill="none" stroke="#fff" stroke-width="1.05" stroke-linejoin="round"/><path d="M0.6 0.7 H10.2" stroke="#fff" stroke-width="1.4"/></svg>
<div style="left:105.7px;top:440.6px;height:22px;line-height:22px;font-size:13.4px;color:#fff;transform:scaleX(0.8590);transform-origin:0 50%;white-space:nowrap;">Ter</div>
<div style="left:143px;top:440px;width:57px;height:22px;background:linear-gradient(180deg,#2f615d 0%,#2a8983 50%,#25aaa3 100%)"></div>
<div style="left:143px;top:440px;width:1px;height:22px;background:rgba(255,255,255,.16)"></div>
<div style="left:143px;top:440px;width:57px;height:1px;background:rgba(255,255,255,.16)"></div>
<div style="left:200px;top:440px;width:1px;height:22px;background:#10302d"></div>
<svg style="left:188px;top:447.7px" width="11" height="9" viewBox="0 0 11 9"><path d="M0.6 0.7 H10.2 L6.4 4.3 V7.4 H4.4 V4.3 Z" fill="none" stroke="#fff" stroke-width="1.05" stroke-linejoin="round"/><path d="M0.6 0.7 H10.2" stroke="#fff" stroke-width="1.4"/></svg>
<div style="left:149.0px;top:440.6px;height:22px;line-height:22px;font-size:13.4px;color:#fff;transform:scaleX(0.9636);transform-origin:0 50%;white-space:nowrap;">Utwor</div>
<div style="left:201px;top:440px;width:167px;height:22px;background:linear-gradient(180deg,#2f615d 0%,#2a8983 50%,#25aaa3 100%)"></div>
<div style="left:201px;top:440px;width:1px;height:22px;background:rgba(255,255,255,.16)"></div>
<div style="left:201px;top:440px;width:167px;height:1px;background:rgba(255,255,255,.16)"></div>
<div style="left:368px;top:440px;width:1px;height:22px;background:#10302d"></div>
<svg style="left:356px;top:447.7px" width="11" height="9" viewBox="0 0 11 9"><path d="M0.6 0.7 H10.2 L6.4 4.3 V7.4 H4.4 V4.3 Z" fill="none" stroke="#fff" stroke-width="1.05" stroke-linejoin="round"/><path d="M0.6 0.7 H10.2" stroke="#fff" stroke-width="1.4"/></svg>
<div style="left:256.0px;top:440.6px;height:22px;line-height:22px;font-size:13.4px;color:#fff;transform:scaleX(0.9168);transform-origin:0 50%;white-space:nowrap;">Nr zam.</div>
<div style="left:369px;top:440px;width:95px;height:22px;background:linear-gradient(180deg,#2f615d 0%,#2a8983 50%,#25aaa3 100%)"></div>
<div style="left:369px;top:440px;width:1px;height:22px;background:rgba(255,255,255,.16)"></div>
<div style="left:369px;top:440px;width:95px;height:1px;background:rgba(255,255,255,.16)"></div>
<div style="left:464px;top:440px;width:1px;height:22px;background:#10302d"></div>
<svg style="left:452px;top:447.7px" width="11" height="9" viewBox="0 0 11 9"><path d="M0.6 0.7 H10.2 L6.4 4.3 V7.4 H4.4 V4.3 Z" fill="none" stroke="#fff" stroke-width="1.05" stroke-linejoin="round"/><path d="M0.6 0.7 H10.2" stroke="#fff" stroke-width="1.4"/></svg>
<div style="left:373.7px;top:440.6px;height:22px;line-height:22px;font-size:13.4px;color:#fff;transform:scaleX(0.9464);transform-origin:0 50%;white-space:nowrap;">Dział zakupu</div>
<div style="left:465px;top:440px;width:80px;height:22px;background:linear-gradient(180deg,#2f615d 0%,#2a8983 50%,#25aaa3 100%)"></div>
<div style="left:465px;top:440px;width:1px;height:22px;background:rgba(255,255,255,.16)"></div>
<div style="left:465px;top:440px;width:80px;height:1px;background:rgba(255,255,255,.16)"></div>
<div style="left:545px;top:440px;width:1px;height:22px;background:#10302d"></div>
<svg style="left:533px;top:447.7px" width="11" height="9" viewBox="0 0 11 9"><path d="M0.6 0.7 H10.2 L6.4 4.3 V7.4 H4.4 V4.3 Z" fill="none" stroke="#fff" stroke-width="1.05" stroke-linejoin="round"/><path d="M0.6 0.7 H10.2" stroke="#fff" stroke-width="1.4"/></svg>
<div style="left:472.6px;top:439.6px;height:22px;line-height:22px;font-size:13.4px;color:#fff;transform:scaleX(0.9557);transform-origin:0 50%;white-space:nowrap;">Nr kontra</div>
<div style="left:546px;top:440px;width:191px;height:22px;background:linear-gradient(180deg,#2f615d 0%,#2a8983 50%,#25aaa3 100%)"></div>
<div style="left:546px;top:440px;width:1px;height:22px;background:rgba(255,255,255,.16)"></div>
<div style="left:546px;top:440px;width:191px;height:1px;background:rgba(255,255,255,.16)"></div>
<div style="left:737px;top:440px;width:1px;height:22px;background:#10302d"></div>
<svg style="left:725px;top:447.7px" width="11" height="9" viewBox="0 0 11 9"><path d="M0.6 0.7 H10.2 L6.4 4.3 V7.4 H4.4 V4.3 Z" fill="none" stroke="#fff" stroke-width="1.05" stroke-linejoin="round"/><path d="M0.6 0.7 H10.2" stroke="#fff" stroke-width="1.4"/></svg>
<div style="left:604.0px;top:440.6px;height:22px;line-height:22px;font-size:13.4px;color:#fff;transform:scaleX(0.9559);transform-origin:0 50%;white-space:nowrap;">Kontrahent</div>
<div style="left:738px;top:440px;width:70px;height:22px;background:linear-gradient(180deg,#2f615d 0%,#2a8983 50%,#25aaa3 100%)"></div>
<div style="left:738px;top:440px;width:1px;height:22px;background:rgba(255,255,255,.16)"></div>
<div style="left:738px;top:440px;width:70px;height:1px;background:rgba(255,255,255,.16)"></div>
<div style="left:808px;top:440px;width:1px;height:22px;background:#10302d"></div>
<svg style="left:796px;top:447.7px" width="11" height="9" viewBox="0 0 11 9"><path d="M0.6 0.7 H10.2 L6.4 4.3 V7.4 H4.4 V4.3 Z" fill="none" stroke="#fff" stroke-width="1.05" stroke-linejoin="round"/><path d="M0.6 0.7 H10.2" stroke="#fff" stroke-width="1.4"/></svg>
<div style="left:742.6px;top:440.6px;height:22px;line-height:22px;font-size:13.4px;color:#fff;transform:scaleX(0.9616);transform-origin:0 50%;white-space:nowrap;">Priorytet</div>
<div style="left:809px;top:440px;width:114px;height:22px;background:linear-gradient(180deg,#2f615d 0%,#2a8983 50%,#25aaa3 100%)"></div>
<div style="left:809px;top:440px;width:1px;height:22px;background:rgba(255,255,255,.16)"></div>
<div style="left:809px;top:440px;width:114px;height:1px;background:rgba(255,255,255,.16)"></div>
<div style="left:923px;top:440px;width:1px;height:22px;background:#10302d"></div>
<svg style="left:911px;top:447.7px" width="11" height="9" viewBox="0 0 11 9"><path d="M0.6 0.7 H10.2 L6.4 4.3 V7.4 H4.4 V4.3 Z" fill="none" stroke="#fff" stroke-width="1.05" stroke-linejoin="round"/><path d="M0.6 0.7 H10.2" stroke="#fff" stroke-width="1.4"/></svg>
<div style="left:822.6px;top:440.6px;height:22px;line-height:22px;font-size:13.4px;color:#fff;transform:scaleX(0.9661);transform-origin:0 50%;white-space:nowrap;">Wartość PLN</div>
<div style="left:924px;top:440px;width:96px;height:22px;background:linear-gradient(180deg,#2f615d 0%,#2a8983 50%,#25aaa3 100%)"></div>
<div style="left:924px;top:440px;width:1px;height:22px;background:rgba(255,255,255,.16)"></div>
<div style="left:924px;top:440px;width:96px;height:1px;background:rgba(255,255,255,.16)"></div>
<div style="left:1020px;top:440px;width:1px;height:22px;background:#10302d"></div>
<svg style="left:1008px;top:447.7px" width="11" height="9" viewBox="0 0 11 9"><path d="M0.6 0.7 H10.2 L6.4 4.3 V7.4 H4.4 V4.3 Z" fill="none" stroke="#fff" stroke-width="1.05" stroke-linejoin="round"/><path d="M0.6 0.7 H10.2" stroke="#fff" stroke-width="1.4"/></svg>
<div style="left:955.0px;top:440.6px;height:22px;line-height:22px;font-size:13.4px;color:#fff;transform:scaleX(0.9208);transform-origin:0 50%;white-space:nowrap;">PLN</div>
<div style="left:1021px;top:440px;width:115px;height:22px;background:linear-gradient(180deg,#2f615d 0%,#2a8983 50%,#25aaa3 100%)"></div>
<div style="left:1021px;top:440px;width:1px;height:22px;background:rgba(255,255,255,.16)"></div>
<div style="left:1021px;top:440px;width:115px;height:1px;background:rgba(255,255,255,.16)"></div>
<div style="left:1136px;top:440px;width:1px;height:22px;background:#10302d"></div>
<svg style="left:1124px;top:447.7px" width="11" height="9" viewBox="0 0 11 9"><path d="M0.6 0.7 H10.2 L6.4 4.3 V7.4 H4.4 V4.3 Z" fill="none" stroke="#fff" stroke-width="1.05" stroke-linejoin="round"/><path d="M0.6 0.7 H10.2" stroke="#fff" stroke-width="1.4"/></svg>
<div style="left:1033.3px;top:440.6px;height:22px;line-height:22px;font-size:13.4px;color:#fff;letter-spacing:-0.194px;white-space:nowrap;">Wartość WAL</div>
<div style="left:1137px;top:440px;width:4px;height:22px;background:linear-gradient(180deg,#2f615d 0%,#2a8983 50%,#25aaa3 100%)"></div>
<div style="left:1137px;top:440px;width:1px;height:22px;background:rgba(255,255,255,.16)"></div>
<div style="left:1137px;top:440px;width:4px;height:1px;background:rgba(255,255,255,.16)"></div>
<div style="left:1141px;top:440px;width:1px;height:22px;background:#10302d"></div>
<div style="left:24px;top:462px;width:1116px;height:1px;background:#0c0c0c"></div>
<div style="left:32.35px;top:463.5px;height:23px;line-height:23px;font-size:11px;color:#111;-webkit-text-stroke:0.16px;white-space:nowrap;">3</div>
<div style="left:61px;top:463px;width:35px;height:23px;background:#d3d3d3"></div>
<div style="left:77.3px;top:462.5px;height:23px;line-height:23px;font-size:11px;color:#111;-webkit-text-stroke:0.16px;letter-spacing:0.305px;white-space:nowrap;">0%</div>
<div style="left:164.0px;top:462.5px;height:23px;line-height:23px;font-size:11px;color:#111;-webkit-text-stroke:0.16px;letter-spacing:-0.005px;white-space:nowrap;">sup</div>
<div style="left:205.0px;top:462.5px;height:23px;line-height:23px;font-size:11px;color:#111;-webkit-text-stroke:0.16px;letter-spacing:-0.192px;white-space:nowrap;">1/2020</div>
<div style="left:372.7px;top:462.5px;height:23px;line-height:23px;font-size:11px;color:#111;-webkit-text-stroke:0.16px;letter-spacing:-0.216px;white-space:nowrap;">Zakupy</div>
<div style="left:469.0px;top:462.5px;height:23px;line-height:23px;font-size:11px;color:#111;-webkit-text-stroke:0.16px;transform:scaleX(0.9647);transform-origin:0 50%;white-space:nowrap;">00002</div>
<div style="left:550.0px;top:462.5px;height:23px;line-height:23px;font-size:11px;color:#111;-webkit-text-stroke:0.16px;transform:scaleX(0.9233);transform-origin:0 50%;white-space:nowrap;">X-KOM SPÓŁKA Z OGRANICZONĄ OD</div>
<div style="left:738px;top:463px;width:70px;height:23px;background:#00ff7f"></div>
<div style="left:771.5px;top:463px;height:23px;line-height:23px;font-size:10.5px;color:#111;-webkit-text-stroke:0.16px;white-space:nowrap;">1</div>
<div style="left:877.5px;top:462.5px;height:23px;line-height:23px;font-size:11px;color:#111;-webkit-text-stroke:0.16px;letter-spacing:0.208px;white-space:nowrap;">3 321,45</div>
<div style="left:928.3px;top:462.5px;height:23px;line-height:23px;font-size:11px;color:#111;-webkit-text-stroke:0.16px;transform:scaleX(0.8974);transform-origin:0 50%;white-space:nowrap;">PLN</div>
<div style="left:1114.0px;top:462.5px;height:23px;line-height:23px;font-size:11px;color:#111;-webkit-text-stroke:0.16px;transform:scaleX(0.9114);transform-origin:0 50%;white-space:nowrap;">0,00</div>
<div style="left:96px;top:463px;width:1px;height:23px;background:#b2b2b2"></div>
<div style="left:142px;top:463px;width:1px;height:23px;background:#b2b2b2"></div>
<div style="left:200px;top:463px;width:1px;height:23px;background:#b2b2b2"></div>
<div style="left:368px;top:463px;width:1px;height:23px;background:#b2b2b2"></div>
<div style="left:464px;top:463px;width:1px;height:23px;background:#b2b2b2"></div>
<div style="left:545px;top:463px;width:1px;height:23px;background:#b2b2b2"></div>
<div style="left:737px;top:463px;width:1px;height:23px;background:#b2b2b2"></div>
<div style="left:808px;top:463px;width:1px;height:23px;background:#b2b2b2"></div>
<div style="left:923px;top:463px;width:1px;height:23px;background:#b2b2b2"></div>
<div style="left:1020px;top:463px;width:1px;height:23px;background:#b2b2b2"></div>
<div style="left:1136px;top:463px;width:1px;height:23px;background:#b2b2b2"></div>
<div style="left:1141px;top:463px;width:1px;height:23px;background:#b2b2b2"></div>
<div style="left:60px;top:463px;width:1px;height:24px;background:#b2b2b2"></div>
<div style="left:60px;top:486px;width:1080px;height:1px;background:#b2b2b2"></div>
<div style="left:42px;top:349px;width:1098px;height:40px;background:#d3d3d3"></div>
<div style="left:78px;top:349px;width:1px;height:40px;background:#6a6a6a"></div>
<div style="left:136px;top:349px;width:1px;height:20px;background:#6a6a6a"></div>
<div style="left:79px;top:368px;width:1061px;height:1px;background:#6a6a6a"></div>
<div style="left:56px;top:364px;width:10px;height:10px;background:#fff;border:1px solid #000"></div>
<div style="left:58px;top:368px;width:6px;height:2px;background:#000"></div>
<div style="left:60px;top:366px;width:2px;height:6px;background:#000"></div>
<div style="left:79px;top:369px;width:1061px;height:1px;background:rgba(255,255,255,.55)"></div>
<div style="left:79px;top:349px;width:1px;height:40px;background:rgba(255,255,255,.45)"></div>
<div style="left:137px;top:349px;width:1px;height:20px;background:rgba(255,255,255,.45)"></div>
<div style="left:136px;top:369px;width:1px;height:20px;background:#6a6a6a"></div>
<div style="left:137px;top:370px;width:1px;height:19px;background:rgba(255,255,255,.5)"></div>
<svg style="left:124px;top:375.5px" width="11" height="9" viewBox="0 0 11 9"><path d="M0.6 0.7 H10.2 L6.4 4.3 V7.4 H4.4 V4.3 Z" fill="none" stroke="#111" stroke-width="1.05" stroke-linejoin="round"/><path d="M0.6 0.7 H10.2" stroke="#111" stroke-width="1.4"/></svg>
<div style="left:97.16px;top:369.5px;height:20px;line-height:20px;font-size:12px;color:#0e0e1e;-webkit-text-stroke:0.16px;white-space:nowrap;">%</div>
<div style="left:226px;top:369px;width:1px;height:20px;background:#6a6a6a"></div>
<div style="left:227px;top:370px;width:1px;height:19px;background:rgba(255,255,255,.5)"></div>
<svg style="left:214px;top:375.5px" width="11" height="9" viewBox="0 0 11 9"><path d="M0.6 0.7 H10.2 L6.4 4.3 V7.4 H4.4 V4.3 Z" fill="none" stroke="#111" stroke-width="1.05" stroke-linejoin="round"/><path d="M0.6 0.7 H10.2" stroke="#111" stroke-width="1.4"/></svg>
<div style="left:157.3px;top:369.5px;height:20px;line-height:20px;font-size:12px;color:#0e0e1e;-webkit-text-stroke:0.16px;letter-spacing:0.200px;white-space:nowrap;">Termin</div>
<div style="left:266px;top:369px;width:1px;height:20px;background:#6a6a6a"></div>
<div style="left:267px;top:370px;width:1px;height:19px;background:rgba(255,255,255,.5)"></div>
<svg style="left:254px;top:375.5px" width="11" height="9" viewBox="0 0 11 9"><path d="M0.6 0.7 H10.2 L6.4 4.3 V7.4 H4.4 V4.3 Z" fill="none" stroke="#111" stroke-width="1.05" stroke-linejoin="round"/><path d="M0.6 0.7 H10.2" stroke="#111" stroke-width="1.4"/></svg>
<div style="left:231.7px;top:368.5px;height:20px;line-height:20px;font-size:12px;color:#0e0e1e;-webkit-text-stroke:0.16px;transform:scaleX(0.9573);transform-origin:0 50%;white-space:nowrap;">NR</div>
<div style="left:339px;top:369px;width:1px;height:20px;background:#6a6a6a"></div>
<div style="left:340px;top:370px;width:1px;height:19px;background:rgba(255,255,255,.5)"></div>
<svg style="left:327px;top:375.5px" width="11" height="9" viewBox="0 0 11 9"><path d="M0.6 0.7 H10.2 L6.4 4.3 V7.4 H4.4 V4.3 Z" fill="none" stroke="#111" stroke-width="1.05" stroke-linejoin="round"/><path d="M0.6 0.7 H10.2" stroke="#111" stroke-width="1.4"/></svg>
<div style="left:276.7px;top:369.5px;height:20px;line-height:20px;font-size:12px;color:#0e0e1e;-webkit-text-stroke:0.16px;letter-spacing:0.116px;white-space:nowrap;">Symbol</div>
<div style="left:478px;top:369px;width:1px;height:20px;background:#6a6a6a"></div>
<div style="left:479px;top:370px;width:1px;height:19px;background:rgba(255,255,255,.5)"></div>
<svg style="left:466px;top:375.5px" width="11" height="9" viewBox="0 0 11 9"><path d="M0.6 0.7 H10.2 L6.4 4.3 V7.4 H4.4 V4.3 Z" fill="none" stroke="#111" stroke-width="1.05" stroke-linejoin="round"/><path d="M0.6 0.7 H10.2" stroke="#111" stroke-width="1.4"/></svg>
<div style="left:370.5px;top:369.5px;height:20px;line-height:20px;font-size:12px;color:#0e0e1e;-webkit-text-stroke:0.16px;letter-spacing:0.056px;white-space:nowrap;">Nazwa zam.</div>
<div style="left:552px;top:369px;width:1px;height:20px;background:#6a6a6a"></div>
<div style="left:553px;top:370px;width:1px;height:19px;background:rgba(255,255,255,.5)"></div>
<svg style="left:540px;top:375.5px" width="11" height="9" viewBox="0 0 11 9"><path d="M0.6 0.7 H10.2 L6.4 4.3 V7.4 H4.4 V4.3 Z" fill="none" stroke="#111" stroke-width="1.05" stroke-linejoin="round"/><path d="M0.6 0.7 H10.2" stroke="#111" stroke-width="1.4"/></svg>
<div style="left:486.0px;top:368.5px;height:20px;line-height:20px;font-size:12px;color:#0e0e1e;-webkit-text-stroke:0.16px;letter-spacing:-0.186px;white-space:nowrap;">Indeks G</div>
<div style="left:723px;top:369px;width:1px;height:20px;background:#6a6a6a"></div>
<div style="left:724px;top:370px;width:1px;height:19px;background:rgba(255,255,255,.5)"></div>
<svg style="left:711px;top:375.5px" width="11" height="9" viewBox="0 0 11 9"><path d="M0.6 0.7 H10.2 L6.4 4.3 V7.4 H4.4 V4.3 Z" fill="none" stroke="#111" stroke-width="1.05" stroke-linejoin="round"/><path d="M0.6 0.7 H10.2" stroke="#111" stroke-width="1.4"/></svg>
<div style="left:602.7px;top:369.5px;height:20px;line-height:20px;font-size:12px;color:#0e0e1e;-webkit-text-stroke:0.16px;letter-spacing:-0.049px;white-space:nowrap;">Nazwa GM</div>
<div style="left:797px;top:369px;width:1px;height:20px;background:#6a6a6a"></div>
<div style="left:798px;top:370px;width:1px;height:19px;background:rgba(255,255,255,.5)"></div>
<svg style="left:785px;top:375.5px" width="11" height="9" viewBox="0 0 11 9"><path d="M0.6 0.7 H10.2 L6.4 4.3 V7.4 H4.4 V4.3 Z" fill="none" stroke="#111" stroke-width="1.05" stroke-linejoin="round"/><path d="M0.6 0.7 H10.2" stroke="#111" stroke-width="1.4"/></svg>
<div style="left:727.5px;top:369.5px;height:20px;line-height:20px;font-size:12px;color:#0e0e1e;-webkit-text-stroke:0.16px;letter-spacing:0.022px;white-space:nowrap;">Ilość zam.</div>
<div style="left:837px;top:369px;width:1px;height:20px;background:#6a6a6a"></div>
<div style="left:838px;top:370px;width:1px;height:19px;background:rgba(255,255,255,.5)"></div>
<svg style="left:825px;top:375.5px" width="11" height="9" viewBox="0 0 11 9"><path d="M0.6 0.7 H10.2 L6.4 4.3 V7.4 H4.4 V4.3 Z" fill="none" stroke="#111" stroke-width="1.05" stroke-linejoin="round"/><path d="M0.6 0.7 H10.2" stroke="#111" stroke-width="1.4"/></svg>
<div style="left:803.3px;top:368.5px;height:20px;line-height:20px;font-size:12px;color:#0e0e1e;-webkit-text-stroke:0.16px;letter-spacing:-0.020px;white-space:nowrap;">JM</div>
<div style="left:911px;top:369px;width:1px;height:20px;background:#6a6a6a"></div>
<div style="left:912px;top:370px;width:1px;height:19px;background:rgba(255,255,255,.5)"></div>
<svg style="left:899px;top:375.5px" width="11" height="9" viewBox="0 0 11 9"><path d="M0.6 0.7 H10.2 L6.4 4.3 V7.4 H4.4 V4.3 Z" fill="none" stroke="#111" stroke-width="1.05" stroke-linejoin="round"/><path d="M0.6 0.7 H10.2" stroke="#111" stroke-width="1.4"/></svg>
<div style="left:854.3px;top:369.5px;height:20px;line-height:20px;font-size:12px;color:#0e0e1e;-webkit-text-stroke:0.16px;transform:scaleX(0.9743);transform-origin:0 50%;white-space:nowrap;">Cena</div>
<div style="left:1072px;top:369px;width:1px;height:20px;background:#6a6a6a"></div>
<div style="left:1073px;top:370px;width:1px;height:19px;background:rgba(255,255,255,.5)"></div>
<svg style="left:1060px;top:375.5px" width="11" height="9" viewBox="0 0 11 9"><path d="M0.6 0.7 H10.2 L6.4 4.3 V7.4 H4.4 V4.3 Z" fill="none" stroke="#111" stroke-width="1.05" stroke-linejoin="round"/><path d="M0.6 0.7 H10.2" stroke="#111" stroke-width="1.4"/></svg>
<div style="left:964.3px;top:369.5px;height:20px;line-height:20px;font-size:12px;color:#0e0e1e;-webkit-text-stroke:0.16px;letter-spacing:0.073px;white-space:nowrap;">Wartość</div>
<div style="left:1113px;top:369px;width:1px;height:20px;background:#6a6a6a"></div>
<div style="left:1114px;top:370px;width:1px;height:19px;background:rgba(255,255,255,.5)"></div>
<svg style="left:1101px;top:375.5px" width="11" height="9" viewBox="0 0 11 9"><path d="M0.6 0.7 H10.2 L6.4 4.3 V7.4 H4.4 V4.3 Z" fill="none" stroke="#111" stroke-width="1.05" stroke-linejoin="round"/><path d="M0.6 0.7 H10.2" stroke="#111" stroke-width="1.4"/></svg>
<div style="left:1077.3px;top:368.5px;height:20px;line-height:20px;font-size:12px;color:#0e0e1e;-webkit-text-stroke:0.16px;transform:scaleX(0.9594);transform-origin:0 50%;white-space:nowrap;">Wal</div>
<div style="left:1141px;top:369px;width:1px;height:20px;background:#6a6a6a"></div>
<div style="left:1142px;top:370px;width:1px;height:19px;background:rgba(255,255,255,.5)"></div>
<div style="left:42px;top:389px;width:1098px;height:1px;background:#111"></div>
<div style="left:79px;top:390px;width:57px;height:22px;background:#d3d3d3"></div>
<div style="left:136px;top:390px;width:1px;height:22px;background:#b2b2b2"></div>
<div style="left:226px;top:390px;width:1px;height:22px;background:#b2b2b2"></div>
<div style="left:266px;top:390px;width:1px;height:22px;background:#b2b2b2"></div>
<div style="left:339px;top:390px;width:1px;height:22px;background:#b2b2b2"></div>
<div style="left:478px;top:390px;width:1px;height:22px;background:#b2b2b2"></div>
<div style="left:552px;top:390px;width:1px;height:22px;background:#b2b2b2"></div>
<div style="left:723px;top:390px;width:1px;height:22px;background:#b2b2b2"></div>
<div style="left:797px;top:390px;width:1px;height:22px;background:#b2b2b2"></div>
<div style="left:837px;top:390px;width:1px;height:22px;background:#b2b2b2"></div>
<div style="left:911px;top:390px;width:1px;height:22px;background:#b2b2b2"></div>
<div style="left:1072px;top:390px;width:1px;height:22px;background:#b2b2b2"></div>
<div style="left:1113px;top:390px;width:1px;height:22px;background:#b2b2b2"></div>
<div style="left:1141px;top:390px;width:1px;height:22px;background:#b2b2b2"></div>
<div style="left:78px;top:390px;width:1px;height:23px;background:#b2b2b2"></div>
<div style="left:78px;top:412px;width:1062px;height:1px;background:#b2b2b2"></div>
<div style="left:50.8px;top:390.5px;height:22px;line-height:22px;font-size:11px;color:#111;-webkit-text-stroke:0.16px;white-space:nowrap;">1</div>
<div style="left:112.0px;top:389.5px;height:22px;line-height:22px;font-size:11px;color:#111;-webkit-text-stroke:0.16px;transform:scaleX(0.9773);transform-origin:0 50%;white-space:nowrap;">67%</div>
<div style="left:230.7px;top:389.5px;height:22px;line-height:22px;font-size:11px;color:#111;-webkit-text-stroke:0.16px;letter-spacing:-0.189px;white-space:nowrap;">2020/</div>
<div style="left:270.7px;top:389.5px;height:22px;line-height:22px;font-size:11px;color:#111;-webkit-text-stroke:0.16px;transform:scaleX(0.9622);transform-origin:0 50%;white-space:nowrap;">019846</div>
<div style="left:344.2px;top:385.2px;height:22px;line-height:22px;font-size:11px;color:#111;-webkit-text-stroke:0.16px;letter-spacing:0.042px;white-space:nowrap;">Klawiatura</div>
<div style="left:483.3px;top:389.5px;height:22px;line-height:22px;font-size:11px;color:#111;-webkit-text-stroke:0.16px;transform:scaleX(0.9595);transform-origin:0 50%;white-space:nowrap;">019846</div>
<div style="left:560.0px;top:389.5px;height:22px;line-height:22px;font-size:11px;color:#4a4a1c;-webkit-text-stroke:0.16px;transform:scaleX(0.9475);transform-origin:0 50%;white-space:nowrap;">Klawiatura M-Med ESPERANZA E</div>
<div style="left:768.3px;top:389.5px;height:22px;line-height:22px;font-size:11px;color:#111;-webkit-text-stroke:0.16px;transform:scaleX(0.9508);transform-origin:0 50%;white-space:nowrap;">3,000</div>
<div style="left:802.3px;top:389.5px;height:22px;line-height:22px;font-size:11px;color:#111;-webkit-text-stroke:0.16px;transform:scaleX(0.8658);transform-origin:0 50%;white-space:nowrap;">SZT</div>
<div style="left:883.3px;top:389.5px;height:22px;line-height:22px;font-size:11px;color:#111;-webkit-text-stroke:0.16px;transform:scaleX(0.9145);transform-origin:0 50%;white-space:nowrap;">17,48</div>
<div style="left:1044.0px;top:389.5px;height:22px;line-height:22px;font-size:11px;color:#111;-webkit-text-stroke:0.16px;transform:scaleX(0.9545);transform-origin:0 50%;white-space:nowrap;">52,44</div>
<div style="left:1075.7px;top:389.5px;height:22px;line-height:22px;font-size:11px;color:#111;-webkit-text-stroke:0.16px;transform:scaleX(0.8787);transform-origin:0 50%;white-space:nowrap;">PLN</div>
<svg style="left:0;top:0;mix-blend-mode:darken" width="1140" height="600" viewBox="0 0 1140 600"><path d="M545.6 320.3 H737.6 V340.3 C715 339.8 690 339 650 338.6 C610 338.5 575 339.4 545.6 340.4 Z" fill="#ffe800"/><path d="M76.7 390.3 L100 392.2 L136 395 L160 396 L225 396.2 L300 396 L420 395.8 L540 395.8 L553 395 L600 392.6 L650 391 L690 390 L697 388.6 L703 388.3 L712 389.5 L733.7 392 L733.7 409 L690 410.5 L650 411.2 L600 411.6 L540 413.7 L420 414 L300 413.5 L265 413 L225 413.9 L180 415 L150 415 L125 413.5 L100 410.3 L76.7 407.6 Z" fill="#ffe800"/></svg>
<svg style="left:0;top:0" width="80" height="600" viewBox="0 0 80 600"><path d="M14.5 314 V328 M14.5 337 V471" stroke="#a8a8a8" stroke-width="1" stroke-dasharray="1 1.3" fill="none"/><path d="M19.5 309.5 H23.5 M19.5 332.5 H23.5 M19.5 475.5 H23.5" stroke="#a8a8a8" stroke-width="1" stroke-dasharray="1 1.2" fill="none"/><path d="M32.5 345 V402.5 H42" stroke="#a8a8a8" stroke-width="1" stroke-dasharray="1 1.2" fill="none"/><path d="M51 328 L56.2 332.6 L51 337.2 Z" fill="#000"/></svg>
<svg style="left:10px;top:305px" width="9" height="9" viewBox="0 0 9 9"><rect x="0.5" y="0.5" width="8" height="8" rx="1" fill="#fff" stroke="#9a9a9a" stroke-width="1"/><path d="M2.3 4.5 H6.7" stroke="#3448a0" stroke-width="1.2"/><path d="M4.5 2.3 V6.7" stroke="#3448a0" stroke-width="1.2"/></svg>
<svg style="left:10px;top:328px" width="9" height="9" viewBox="0 0 9 9"><rect x="0.5" y="0.5" width="8" height="8" rx="1" fill="#fff" stroke="#9a9a9a" stroke-width="1"/><path d="M2.3 4.5 H6.7" stroke="#3448a0" stroke-width="1.2"/></svg>
<svg style="left:10px;top:471px" width="9" height="9" viewBox="0 0 9 9"><rect x="0.5" y="0.5" width="8" height="8" rx="1" fill="#fff" stroke="#9a9a9a" stroke-width="1"/><path d="M2.3 4.5 H6.7" stroke="#3448a0" stroke-width="1.2"/><path d="M4.5 2.3 V6.7" stroke="#3448a0" stroke-width="1.2"/></svg>
<svg style="left:0;top:0" width="160" height="360" viewBox="0 0 160 360"><rect x="97" y="319.3" width="46.4" height="24.3" fill="#d3d3d3" stroke="#000" stroke-width="1.7"/></svg>
<svg style="left:110px;top:298.8px" width="21" height="19" viewBox="0 0 21 19"><path d="M4 0.2 V2.6 M12.4 0.2 V2.6" stroke="#4a5568" stroke-width="1.2"/><rect x="0.7" y="1.5" width="14.8" height="12.4" rx="1.8" fill="none" stroke="#4a5568" stroke-width="1.2"/><path d="M0.7 4.4 H15.5" stroke="#4a5568" stroke-width="1.1"/><path d="M2.7 7.9 H5.1 M7 7.9 H9.4 M11.3 7.9 H13.5 M2.7 11.6 H5.1 M7 11.6 H9.4" stroke="#2f7fd6" stroke-width="1.7"/><circle cx="14.9" cy="13.6" r="4.3" fill="#fff" fill-opacity="0.8"/><circle cx="14.9" cy="13.6" r="4.3" fill="none" stroke="#4a90dc" stroke-width="1.2" stroke-dasharray="23.5 3.5" stroke-dashoffset="-2.2"/><path d="M14.7 11.2 V13.9 L16.5 14.7" fill="none" stroke="#2f6fc4" stroke-width="1.2"/><path d="M18.3 10.8 L20.2 13 L17.6 13.3 Z" fill="#4a90dc"/></svg>
<svg style="left:110px;top:322px" width="21" height="19" viewBox="0 0 21 19"><path d="M4 0.2 V2.6 M12.4 0.2 V2.6" stroke="#4a5568" stroke-width="1.2"/><rect x="0.7" y="1.5" width="14.8" height="12.4" rx="1.8" fill="none" stroke="#4a5568" stroke-width="1.2"/><path d="M0.7 4.4 H15.5" stroke="#4a5568" stroke-width="1.1"/><path d="M2.7 7.9 H5.1 M7 7.9 H9.4 M11.3 7.9 H13.5 M2.7 11.6 H5.1 M7 11.6 H9.4" stroke="#2f7fd6" stroke-width="1.7"/><circle cx="14.9" cy="13.6" r="4.3" fill="#fff" fill-opacity="0.8"/><circle cx="14.9" cy="13.6" r="4.3" fill="none" stroke="#4a90dc" stroke-width="1.2" stroke-dasharray="23.5 3.5" stroke-dashoffset="-2.2"/><path d="M14.7 11.2 V13.9 L16.5 14.7" fill="none" stroke="#2f6fc4" stroke-width="1.2"/><path d="M18.3 10.8 L20.2 13 L17.6 13.3 Z" fill="#4a90dc"/></svg>
<svg style="left:110px;top:465px" width="21" height="19" viewBox="0 0 21 19"><path d="M4 0.2 V2.6 M12.4 0.2 V2.6" stroke="#4a5568" stroke-width="1.2"/><rect x="0.7" y="1.5" width="14.8" height="12.4" rx="1.8" fill="none" stroke="#4a5568" stroke-width="1.2"/><path d="M0.7 4.4 H15.5" stroke="#4a5568" stroke-width="1.1"/><path d="M2.7 7.9 H5.1 M7 7.9 H9.4 M11.3 7.9 H13.5 M2.7 11.6 H5.1 M7 11.6 H9.4" stroke="#2f7fd6" stroke-width="1.7"/><circle cx="14.9" cy="13.6" r="4.3" fill="#fff" fill-opacity="0.8"/><circle cx="14.9" cy="13.6" r="4.3" fill="none" stroke="#4a90dc" stroke-width="1.2" stroke-dasharray="23.5 3.5" stroke-dashoffset="-2.2"/><path d="M14.7 11.2 V13.9 L16.5 14.7" fill="none" stroke="#2f6fc4" stroke-width="1.2"/><path d="M18.3 10.8 L20.2 13 L17.6 13.3 Z" fill="#4a90dc"/></svg>
</body></html>
